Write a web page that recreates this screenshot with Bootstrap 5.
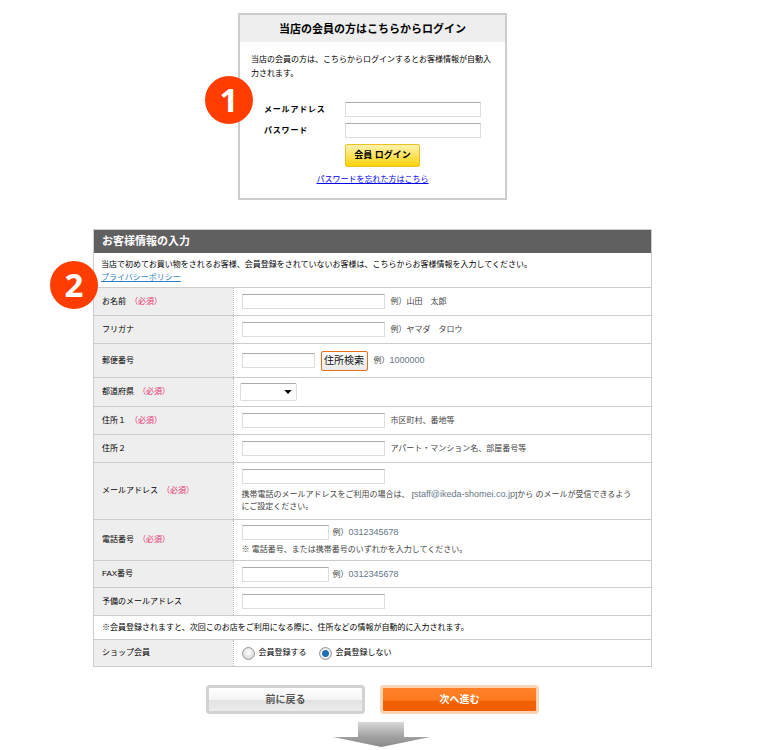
<!DOCTYPE html>
<html lang="ja">
<head>
<meta charset="utf-8">
<title>お客様情報の入力</title>
<link href="https://cdn.jsdelivr.net/npm/bootstrap@5.3.0/dist/css/bootstrap.min.css" rel="stylesheet">
<style>
html,body{margin:0;background:#fff;overflow:hidden}
body{font-family:"Liberation Sans","Noto Sans CJK JP",sans-serif;font-size:8px;line-height:12px;color:#000;height:750px}
.page-wrap{width:745px;padding-top:13px}
.login-box{position:relative;width:269px;height:187px;border:2px solid #ccc}
.login-head{height:27px;background:#eee;font-size:11px;font-weight:700;line-height:28px;text-align:center}
.login-desc{padding:11px 11px 0 11px;height:57px;line-height:14px}
.login-row{height:21px;padding-left:24px}
.login-label{width:81px;font-weight:700;font-size:8px;letter-spacing:.8px}
.login-btn{margin:3px 0 0 105px;width:75px;height:23px;border:1px solid #f0c020;border-radius:2px;background:linear-gradient(#fff3b0,#ffe566 45%,#ffd20a);font-size:9px;font-weight:700;line-height:21px;text-align:center;padding:0;color:#000}
.login-link{display:block;margin-top:7px;text-align:center;color:#00e;text-decoration:underline}
.num-dot{position:absolute;width:48px;height:48px;border-radius:50%;background:#ff3d00;color:#fff;font-family:"Open Sans",sans-serif;font-weight:700;font-size:33px;line-height:47px;text-align:center}
.dot-one{left:-35px;top:61px}
.dot-two{left:-44px;top:31px}
.form-panel{position:relative;width:559px;margin-top:29px;border:1px solid #ccc;border-bottom:0}
.form-title{height:23px;background:#606060;color:#fff;font-size:11px;font-weight:700;line-height:23px;padding-left:8px}
.form-intro{height:34px;padding:6px 7px 0 7px}
.form-intro a{display:inline-block;margin-top:1px;color:#2f7fc1}
.cust-table{width:557px;margin:0;table-layout:fixed;border-collapse:collapse;--bs-table-bg:transparent;font-size:8px;line-height:12px}
.cust-table>tbody>tr>*{padding:0;border:0;border-top:1px solid #ccc;border-bottom:0;vertical-align:middle;color:#000;box-shadow:none}
.cust-table>tbody>tr:last-child>*{border-bottom:1px solid #ccc}
.cust-table th{width:139px;background:#eee;font-weight:400;padding-left:8px!important;border-right:1px dotted #bbb!important}
.cust-table td.val-cell{padding-left:8px!important}
.req-mark{color:#e8306f;margin-left:4px}
.field-box{display:block;height:15px;width:143px;min-height:0;padding:0 3px;border:1px solid #ddd;border-top-color:#aaa;border-radius:0;font-size:9px;background:#fff}
.field-short{width:73px}
.field-mid{width:87px}
.login-field{width:136px}
.note-gap{margin-left:6px}
.tel-gap{margin-left:4px}
.note-gray{color:#444}
.num-sample{color:#667788;font-size:9px}
.pref-select{width:57px;height:18px;min-height:0;margin-left:-2px;padding:0;border:1px solid #ddd;border-top-color:#aaa;border-radius:2px;font-size:8px;background-size:8px 4px;background-position:right 4px center;background-repeat:no-repeat;background-image:url("data:image/svg+xml,%3Csvg xmlns='http://www.w3.org/2000/svg' viewBox='0 0 11 6'%3E%3Cpath d='M0 0h11L5.5 6z' fill='%23000'/%3E%3C/svg%3E")}
.zip-btn{width:47px;height:20px;margin-left:6px;padding:0;border:1px solid #e5701c;border-radius:2px;background:linear-gradient(#fff,#e9e9e9);font-size:10px;line-height:18px;color:#111}
.radio-dot{appearance:none;flex:none;width:13px;height:13px;margin:0;border-radius:50%;border:1px solid #999;background:radial-gradient(circle at 50% 40%,#fff,#ccc)}
.radio-dot:checked{background:radial-gradient(circle,#1f6fb5 0 3px,#fff 4px,#ccd 6px)}
.rh-28{height:28px}.rh-34{height:34px}.rh-29{height:29px}.rh-57{height:57px}.rh-41{height:41px}.rh-27{height:27px}.rh-24{height:24px}.rh-26{height:27px}
.nav-pair{margin-top:18px;gap:15px}
.step-btn{width:159px;height:29px;padding:0;border-radius:4px;font-size:10px;font-weight:700;line-height:23px;text-align:center}
.step-back{border:3px solid #d2d2d2;background:linear-gradient(#fff,#f4f4f4 50%,#e2e2e2 52%,#ececec);color:#555}
.step-next{border:3px solid #fdd3b5;background:linear-gradient(#ff8128,#ff7a20 50%,#f06000 60%,#f06000);color:#fff}
.down-arrow{display:block;width:97px;height:25px;margin:8px 0 0 17px}
</style>
</head>
<body>
<div class="page-wrap d-flex flex-column align-items-center">
  <div class="login-box">
    <div class="num-dot dot-one">1</div>
    <div class="login-head">当店の会員の方はこちらからログイン</div>
    <div class="login-desc">当店の会員の方は、こちらからログインするとお客様情報が自動入力されます。</div>
    <div class="login-row d-flex align-items-center"><span class="login-label">メールアドレス</span><input class="form-control field-box login-field" type="text"></div>
    <div class="login-row d-flex align-items-center"><span class="login-label">パスワード</span><input class="form-control field-box login-field" type="password"></div>
    <button class="btn login-btn" type="button">会員 ログイン</button>
    <a class="login-link" href="#">パスワードを忘れた方はこちら</a>
  </div>

  <div class="form-panel">
    <div class="num-dot dot-two">2</div>
    <div class="form-title">お客様情報の入力</div>
    <div class="form-intro">当店で初めてお買い物をされるお客様、会員登録をされていないお客様は、こちらからお客様情報を入力してください。<br><a href="#">プライバシーポリシー</a></div>
    <table class="table cust-table">
      <tbody>
        <tr class="rh-28"><th>お名前<span class="req-mark">（必須）</span></th><td class="val-cell"><div class="d-flex align-items-center"><input class="form-control field-box" type="text"><span class="note-gray note-gap">例）山田　太郎</span></div></td></tr>
        <tr class="rh-28"><th>フリガナ</th><td class="val-cell"><div class="d-flex align-items-center"><input class="form-control field-box" type="text"><span class="note-gray note-gap">例）ヤマダ　タロウ</span></div></td></tr>
        <tr class="rh-34"><th>郵便番号</th><td class="val-cell"><div class="d-flex align-items-center"><input class="form-control field-box field-short" type="text"><button class="btn zip-btn" type="button">住所検索</button><span class="note-gray note-gap">例）<span class="num-sample">1000000</span></span></div></td></tr>
        <tr class="rh-29"><th>都道府県<span class="req-mark">（必須）</span></th><td class="val-cell"><select class="form-select pref-select"><option></option></select></td></tr>
        <tr class="rh-28"><th>住所１<span class="req-mark">（必須）</span></th><td class="val-cell"><div class="d-flex align-items-center"><input class="form-control field-box" type="text"><span class="note-gray note-gap">市区町村、番地等</span></div></td></tr>
        <tr class="rh-28"><th>住所２</th><td class="val-cell"><div class="d-flex align-items-center"><input class="form-control field-box" type="text"><span class="note-gray note-gap">アパート・マンション名、部屋番号等</span></div></td></tr>
        <tr class="rh-57"><th>メールアドレス<span class="req-mark">（必須）</span></th><td class="val-cell"><input class="form-control field-box" type="text"><div class="note-gray mt-1">携帯電話のメールアドレスをご利用の場合は、 [<span class="num-sample">staff@ikeda-shomei.co.jp</span>]から のメールが受信できるよう<br>にご設定ください。</div></td></tr>
        <tr class="rh-41"><th>電話番号<span class="req-mark">（必須）</span></th><td class="val-cell"><div class="d-flex align-items-center"><input class="form-control field-box field-mid" type="text"><span class="note-gray tel-gap">例）<span class="num-sample">0312345678</span></span></div><div class="note-gray mt-1">※ 電話番号、または携帯番号のいずれかを入力してください。</div></td></tr>
        <tr class="rh-27"><th>FAX番号</th><td class="val-cell"><div class="d-flex align-items-center"><input class="form-control field-box field-mid" type="text"><span class="note-gray tel-gap">例）<span class="num-sample">0312345678</span></span></div></td></tr>
        <tr class="rh-28"><th>予備のメールアドレス</th><td class="val-cell"><input class="form-control field-box" type="text"></td></tr>
        <tr class="rh-24"><td colspan="2" class="ps-2">※会員登録されますと、次回このお店をご利用になる際に、住所などの情報が自動的に入力されます。</td></tr>
        <tr class="rh-26"><th>ショップ会員</th><td class="val-cell"><div class="d-flex align-items-center"><input class="radio-dot" type="radio" name="shop-member"><span class="ms-1 me-2">会員登録する</span><input class="radio-dot ms-1" type="radio" name="shop-member" checked><span class="ms-1">会員登録しない</span></div></td></tr>
      </tbody>
    </table>
  </div>

  <div class="d-flex nav-pair">
    <button class="btn step-btn step-back" type="button">前に戻る</button>
    <button class="btn step-btn step-next" type="button">次へ進む</button>
  </div>
  <svg class="down-arrow" viewBox="0 0 97 25" aria-hidden="true">
    <defs><linearGradient id="arrowFill" x1="0" y1="0" x2="0" y2="1"><stop offset="0" stop-color="#d8d8d8"/><stop offset=".6" stop-color="#a0a0a0"/><stop offset="1" stop-color="#8a8a8a"/></linearGradient></defs>
    <path d="M25 0h46v15h26L48.500 25 0 15h25z" fill="url(#arrowFill)"/>
  </svg>
</div>
</body>
</html>
